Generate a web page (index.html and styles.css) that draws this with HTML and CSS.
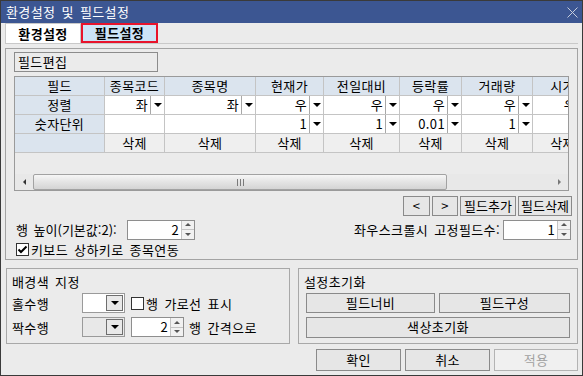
FILE: index.html
```html
<!DOCTYPE html>
<html lang="ko">
<head>
    <meta charset="UTF-8">
    <title>환경설정 및 필드설정</title>
    <link rel="stylesheet" href="styles.css">
</head>
<body>
    <div class="window">
        <div class="titlebar">
            <span class="title">환경설정 및 필드설정</span>
            <svg class="close" width="11" height="11" viewBox="0 0 11 11"><path d="M0.5 0.5L10.5 10.5M10.5 0.5L0.5 10.5"/></svg>
        </div>
        <div class="body">
            <div class="tabs">
                <div class="tab">환경설정</div>
                <div class="tab active">필드설정</div>
            </div>
            <div class="panel">
                <div class="editor">
                    <div class="caption-box">필드편집</div>
                    <div class="grid">
                        <div class="grid-view">
                            <div class="grid-row head">
                                <div class="cell fixed">필드</div>
                                <div class="cell">종목코드</div>
                                <div class="cell">종목명</div>
                                <div class="cell">현재가</div>
                                <div class="cell">전일대비</div>
                                <div class="cell">등락률</div>
                                <div class="cell">거래량</div>
                                <div class="cell">시가</div>
                            </div>
                            <div class="grid-row">
                                <div class="cell fixed">정렬</div>
                                <div class="cell dd"><span class="val">좌</span><span class="arrow"></span></div>
                                <div class="cell dd"><span class="val">좌</span><span class="arrow"></span></div>
                                <div class="cell dd"><span class="val">우</span><span class="arrow"></span></div>
                                <div class="cell dd"><span class="val">우</span><span class="arrow"></span></div>
                                <div class="cell dd"><span class="val">우</span><span class="arrow"></span></div>
                                <div class="cell dd"><span class="val">우</span><span class="arrow"></span></div>
                                <div class="cell dd"><span class="val">우</span><span class="arrow"></span></div>
                            </div>
                            <div class="grid-row">
                                <div class="cell fixed">숫자단위</div>
                                <div class="cell blank"></div>
                                <div class="cell blank"></div>
                                <div class="cell dd"><span class="val">1</span><span class="arrow"></span></div>
                                <div class="cell dd"><span class="val">1</span><span class="arrow"></span></div>
                                <div class="cell dd"><span class="val">0.01</span><span class="arrow"></span></div>
                                <div class="cell dd"><span class="val">1</span><span class="arrow"></span></div>
                                <div class="cell blank"></div>
                            </div>
                            <div class="grid-row">
                                <div class="cell fixed"></div>
                                <div class="cell del">삭제</div>
                                <div class="cell del">삭제</div>
                                <div class="cell del">삭제</div>
                                <div class="cell del">삭제</div>
                                <div class="cell del">삭제</div>
                                <div class="cell del">삭제</div>
                                <div class="cell del">삭제</div>
                            </div>
                        </div>
                        <div class="hscroll">
                            <div class="sb-btn"><span class="tri-left"></span></div>
                            <div class="sb-thumb">
                                <svg width="7" height="7" viewBox="0 0 7 7"><path d="M0.5 0V7M3.5 0V7M6.5 0V7"/></svg>
                            </div>
                            <div class="sb-track"></div>
                            <div class="sb-btn"><span class="tri-right"></span></div>
                        </div>
                    </div>
                    <div class="btn-row">
                        <div class="btn nav">&lt;</div>
                        <div class="btn nav">&gt;</div>
                        <div class="btn field">필드추가</div>
                        <div class="btn field del-field">필드삭제</div>
                    </div>
                    <div class="spin-row">
                        <div class="spin-field">
                            <span class="spin-label">행 높이(기본값:2):</span>
                            <div class="spin wide">
                                <span class="spin-val">2</span>
                                <span class="spin-btns"><span class="up"></span><span class="down"></span></span>
                            </div>
                        </div>
                        <div class="spin-field">
                            <span class="spin-label right">좌우스크롤시 고정필드수:</span>
                            <div class="spin wide">
                                <span class="spin-val">1</span>
                                <span class="spin-btns"><span class="up"></span><span class="down"></span></span>
                            </div>
                        </div>
                    </div>
                    <div class="check-row">
                        <span class="checkbox checked">
                            <svg width="11" height="11" viewBox="0 0 11 11"><path d="M1.5 5.5L4 8L9.5 2.5"/></svg>
                        </span>
                        <span>키보드 상하키로 종목연동</span>
                    </div>
                </div>
            </div>
            <div class="groups">
                <div class="group bg-group">
                    <div class="group-title">배경색 지정</div>
                    <div class="group-line">
                        <span class="row-label">홀수행</span>
                        <div class="color-dd"><span class="swatch"></span><span class="dd-btn"><span class="tri-down"></span></span></div>
                        <span class="checkbox"></span>
                        <span class="opt-label">행 가로선 표시</span>
                    </div>
                    <div class="group-line">
                        <span class="row-label">짝수행</span>
                        <div class="color-dd off"><span class="swatch"></span><span class="dd-btn"><span class="tri-down"></span></span></div>
                        <div class="spin small">
                            <span class="spin-val">2</span>
                            <span class="spin-btns"><span class="up"></span><span class="down"></span></span>
                        </div>
                        <span class="opt-label gap">행 간격으로</span>
                    </div>
                </div>
                <div class="group reset-group">
                    <div class="group-title">설정초기화</div>
                    <div class="reset-btns">
                        <div class="btn reset-a">필드너비</div>
                        <div class="btn reset-b">필드구성</div>
                    </div>
                    <div class="btn reset-all">색상초기화</div>
                </div>
            </div>
            <div class="footer">
                <div class="btn foot">확인</div>
                <div class="btn foot">취소</div>
                <div class="btn foot disabled">적용</div>
            </div>
        </div>
    </div>
</body>
</html>
```

FILE: styles.css
```css
:root {
    --window-bg: #ebebeb;
    --title-bg: #3c5692;
    --header-bg: #dbe4ee;
    --grid-line: #c4c4c4;
    --btn-border: #8a8a8a;
    --group-border: #a8a8a8;
}
* {
    box-sizing: border-box;
}
body {
    margin: 0;
    background-color: var(--window-bg);
    font-family: "Noto Sans CJK KR", "Noto Sans", sans-serif;
    font-size: 13px;
    letter-spacing: 0.4px;
    word-spacing: 2px;
    color: #000;
}
.window {
    width: 583px;
    height: 376px;
    border: 1px solid #3a3a3a;
    background-color: var(--window-bg);
    display: flex;
    flex-direction: column;
}
.titlebar {
    height: 22px;
    flex-shrink: 0;
    background-color: var(--title-bg);
    color: #fff;
    display: flex;
    align-items: center;
    justify-content: space-between;
    padding: 0 4px 0 5px;
    line-height: 22px;
}
.close path {
    stroke: #c6cddd;
    stroke-width: 1;
    fill: none;
}
.body {
    padding: 0 4px;
}

/* tabs */
.tabs {
    display: flex;
    height: 20px;
}
.tab {
    width: 76px;
    height: 20px;
    background-color: #fff;
    border: 1px solid #c9c9c9;
    border-bottom: none;
    font-weight: bold;
    text-align: center;
    line-height: 19px;
}
.tab.active {
    width: 77px;
    background-color: #cce4f7;
    border: 2px solid #e8132b;
    line-height: 16px;
}
.panel {
    border-top: 1px solid #c9c9c9;
    padding-top: 4px;
}
.editor {
    height: 212px;
    border: 1px solid #a3a3a3;
    padding: 3px 5px 0 8px;
}
.caption-box {
    width: 144px;
    height: 20px;
    border: 1px solid #8c8c8c;
    padding-left: 3px;
    line-height: 18px;
}

/* grid */
.grid {
    width: 555px;
    height: 115px;
    margin-top: 4px;
    border: 1px solid #9a9a9a;
    display: flex;
    flex-direction: column;
    background-color: #ebebeb;
}
.grid-view {
    flex: 1;
    overflow: hidden;
}
.grid-row {
    display: grid;
    grid-template-columns: 90px 60px 91px 68px 76px 62px 71px 60px;
    width: max-content;
    height: 19px;
    border-bottom: 1px solid var(--grid-line);
}
.cell {
    border-right: 1px solid var(--grid-line);
    line-height: 18px;
    text-align: center;
    white-space: nowrap;
    overflow: hidden;
}
.head .cell,
.cell.fixed {
    background-color: var(--header-bg);
}
.cell.blank {
    background-color: #fff;
}
.cell.dd {
    display: flex;
    background-color: #fff;
}
.cell.dd .val {
    flex: 1;
    text-align: right;
    padding-right: 2px;
}
.cell.dd .arrow {
    width: 14px;
    border-left: 1px solid #a8a8a8;
    display: flex;
    align-items: center;
    justify-content: center;
}
.cell.dd .arrow::after,
.tri-down {
    content: "";
    width: 0;
    height: 0;
    border-left: 4px solid transparent;
    border-right: 4px solid transparent;
    border-top: 4px solid #000;
}
.cell.del {
    background-color: #efefef;
}
.hscroll {
    height: 16px;
    display: flex;
    background-color: #e8e8e8;
}
.sb-btn {
    width: 18px;
    display: flex;
    align-items: center;
    justify-content: center;
}
.sb-btn:last-child {
    width: 17px;
}
.tri-left {
    border-top: 3px solid transparent;
    border-bottom: 3px solid transparent;
    border-right: 3px solid #333;
}
.tri-right {
    border-top: 3px solid transparent;
    border-bottom: 3px solid transparent;
    border-left: 3px solid #777;
}
.sb-thumb {
    width: 414px;
    border: 1px solid #a2a2a2;
    border-radius: 2px;
    background: linear-gradient(#f6f6f6, #e4e4e4 50%, #d4d4d4);
    display: flex;
    align-items: center;
    justify-content: center;
}
.sb-thumb path {
    stroke: #7a7a7a;
    stroke-width: 1;
}
.sb-track {
    flex: 1;
}

/* buttons */
.btn {
    height: 20px;
    border: 1px solid var(--btn-border);
    background-color: #e6e6e6;
    line-height: 18px;
    text-align: center;
    white-space: nowrap;
}
.btn-row {
    display: flex;
    justify-content: flex-end;
    gap: 2px;
    margin-top: 5px;
}
.btn.nav {
    width: 26px;
}
.btn.nav:first-child {
    width: 27px;
}
.btn.field {
    width: 56px;
    letter-spacing: 0;
}
.btn.del-field {
    width: 54px;
}

/* spin boxes */
.spin-row {
    height: 21px;
    margin-top: 3px;
    padding-left: 2px;
    padding-right: 1px;
    display: flex;
    justify-content: space-between;
    align-items: center;
}
.spin-field {
    display: flex;
    align-items: center;
}
.spin-label {
    width: 111px;
    white-space: nowrap;
    letter-spacing: 0;
}
.spin-label.right {
    width: auto;
    margin-right: 3px;
    letter-spacing: 0.4px;
}
.spin {
    height: 20px;
    display: flex;
    border: 1px solid #8e8e8e;
    background-color: #fff;
}
.spin.wide {
    width: 68px;
}
.spin.small {
    width: 53px;
    margin-left: 6px;
}
.spin-val {
    flex: 1;
    text-align: right;
    padding-right: 2px;
    line-height: 18px;
}
.spin-btns {
    width: 13px;
    display: flex;
    flex-direction: column;
    border-left: 1px solid #c4c4c4;
}
.spin-btns span {
    flex: 1;
    display: flex;
    align-items: center;
    justify-content: center;
    background-color: #f1f1f1;
}
.spin-btns .up {
    border-bottom: 1px solid #c4c4c4;
}
.spin-btns .up::after {
    content: "";
    border-left: 3px solid transparent;
    border-right: 3px solid transparent;
    border-bottom: 3px solid #555;
}
.spin-btns .down::after {
    content: "";
    border-left: 3px solid transparent;
    border-right: 3px solid transparent;
    border-top: 3px solid #555;
}

/* checkbox */
.check-row {
    display: flex;
    align-items: center;
    gap: 2px;
    margin-top: 3px;
    padding-left: 2px;
    height: 13px;
    line-height: 13px;
}
.checkbox {
    width: 13px;
    height: 13px;
    border: 1px solid #333;
    background-color: #fff;
    display: inline-flex;
    flex-shrink: 0;
}
.checkbox path {
    stroke: #000;
    stroke-width: 2;
    fill: none;
}

/* groups */
.groups {
    display: flex;
    gap: 8px;
    margin-top: 8px;
    padding-left: 1px;
}
.group {
    height: 76px;
    border: 1px solid var(--group-border);
}
.group-title {
    height: 18px;
    line-height: 18px;
}
.bg-group {
    width: 284px;
    padding: 4px 5px 0 5px;
}
.group-line {
    display: flex;
    align-items: center;
    height: 20px;
    margin-top: 2px;
}
.group-line + .group-line {
    margin-top: 4px;
}
.row-label {
    width: 70px;
}
.color-dd {
    width: 43px;
    height: 20px;
    display: flex;
    border: 1px solid #9a9a9a;
    background-color: #fff;
    margin-right: 6px;
}
.color-dd.off {
    background-color: #e8e8e8;
    margin-right: 0;
}
.color-dd .swatch {
    flex: 1;
}
.dd-btn {
    width: 17px;
    margin: 1px 1px 1px 0;
    border: 1px solid #6e6e6e;
    background-color: #e9e9e9;
    display: flex;
    align-items: center;
    justify-content: center;
}
.opt-label {
    margin-left: 2px;
}
.opt-label.gap {
    margin-left: 5px;
}
.reset-group {
    width: 280px;
    padding: 4px 6px 0 5px;
}
.reset-btns {
    display: flex;
    gap: 4px;
    margin-top: 2px;
    padding-left: 2px;
}
.btn.reset-a {
    width: 129px;
}
.btn.reset-b {
    width: 131px;
}
.btn.reset-all {
    height: 21px;
    margin-top: 4px;
    margin-left: 2px;
    width: 264px;
}
.footer {
    display: flex;
    justify-content: flex-end;
    gap: 4px;
    margin-top: 5px;
}
.btn.foot {
    width: 85px;
    height: 22px;
    line-height: 20px;
}
.btn.foot.disabled {
    width: 84px;
    background-color: #f0f0f0;
    border-color: #b3b3b3;
    color: #a0a0a0;
}
```
